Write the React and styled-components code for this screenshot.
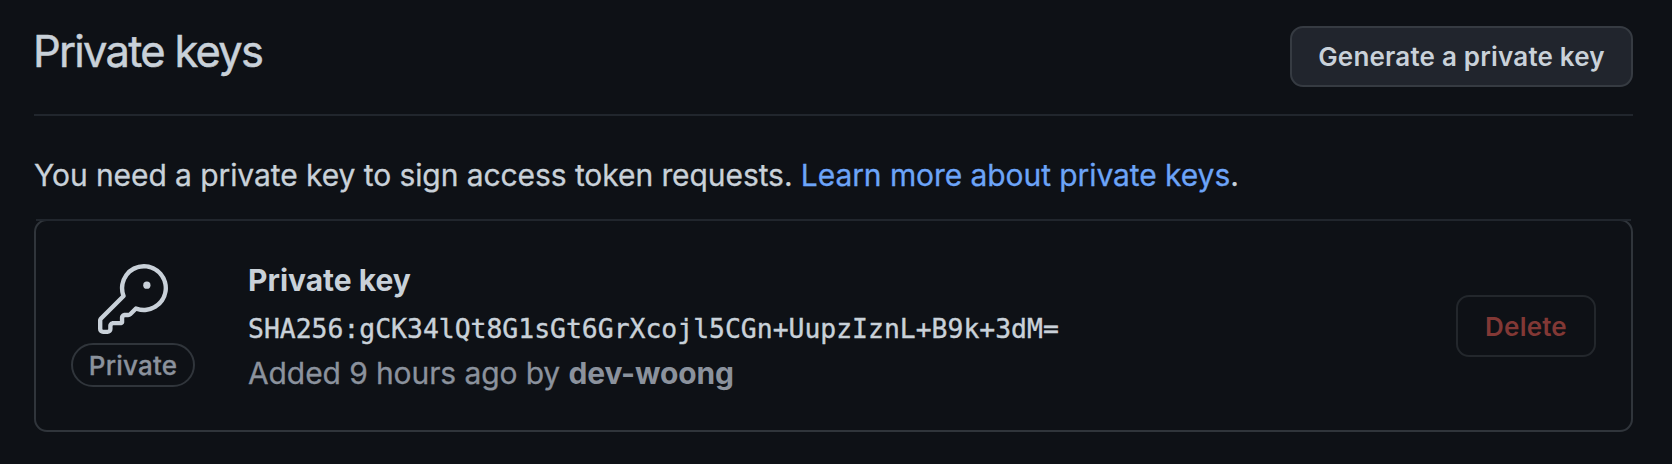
import React from 'react';
import styled, { createGlobalStyle } from 'styled-components';

const GlobalStyle = createGlobalStyle`
  * { box-sizing: border-box; }
  body {
    margin: 0;
    background: #0e1116;
    color: #c9d1d9;
    font-family: Inter, "Liberation Sans", sans-serif;
  }
`;

const Page = styled.main`
  width: 1672px;
  height: 464px;
  padding: 18px 39px 0 34px;
  overflow: hidden;
`;

const Header = styled.header`
  display: flex;
  justify-content: space-between;
  align-items: flex-start;
  height: 98px;
  border-bottom: 2px solid #21262d;
`;

const Title = styled.h2`
  margin: 0 0 0 -1px;
  font-size: 43.5px;
  font-weight: 400;
  line-height: 66px;
  letter-spacing: -1.75px;
  -webkit-text-stroke: 0.5px currentColor;
  white-space: nowrap;
`;

const Button = styled.button`
  display: flex;
  align-items: center;
  justify-content: center;
  flex: none;
  width: ${(p) => p.$width}px;
  height: ${(p) => p.$height}px;
  padding: 0;
  border: 2px solid ${(p) => (p.$danger ? '#23272c' : '#363b42')};
  border-radius: 13px;
  background: ${(p) => (p.$danger ? 'transparent' : '#21252d')};
  color: ${(p) => (p.$danger ? '#823835' : '#c9d1d9')};
  font-family: inherit;
  font-size: 26px;
  font-weight: 600;
  letter-spacing: 0.2px;
  white-space: nowrap;
`;

const HeaderAction = styled.div`
  padding-top: 8px;
`;

const Intro = styled.p`
  margin: 36px 0 21px;
  font-size: 30px;
  line-height: 46px;
  letter-spacing: -0.075px;
  -webkit-text-stroke: 0.3px currentColor;
  white-space: nowrap;
`;

const Link = styled.a`
  color: #6ca4f8;
  text-decoration: none;
`;

const KeyCard = styled.section`
  position: relative;
  display: flex;
  align-items: flex-start;
  height: 213px;
  padding: 0 35px;
  border: 2px solid #30353b;
  border-radius: 13px;

  &::before {
    content: "";
    position: absolute;
    top: -2px;
    left: 0;
    right: 0;
    height: 2px;
    background: #21262d;
  }
`;

const KeyBadge = styled.div`
  display: flex;
  flex-direction: column;
  align-items: center;
  width: 124px;
  padding-top: 43px;

  svg {
    display: block;
    fill: #c9d1d9;
  }
`;

const Pill = styled.span`
  width: 124px;
  height: 44px;
  margin-top: 9px;
  border: 2px solid #30353b;
  border-radius: 22px;
  color: #8b929d;
  font-size: 26px;
  font-weight: 500;
  line-height: 42px;
  letter-spacing: 0.2px;
  -webkit-text-stroke: 0.3px currentColor;
  text-align: center;
`;

const KeyInfo = styled.div`
  flex: 1;
  margin-left: 53px;
  padding-top: 36px;
  white-space: nowrap;
`;

const KeyName = styled.div`
  margin-bottom: 4px;
  font-size: 30px;
  font-weight: 700;
  line-height: 46px;
`;

const Fingerprint = styled.code`
  display: block;
  font-family: "DejaVu Sans Mono", monospace;
  font-size: 26.42px;
  line-height: 44px;
  -webkit-text-stroke: 0.4px currentColor;
`;

const Added = styled.div`
  color: #8b929d;
  font-size: 30px;
  line-height: 44px;
  letter-spacing: -0.1px;
  -webkit-text-stroke: 0.3px currentColor;

  strong {
    font-weight: 700;
    letter-spacing: -0.15px;
    -webkit-text-stroke: 0;
  }
`;

const KeyAction = styled.div`
  padding-top: 74px;
`;

const KeyIcon = () => (
  <svg width="70" height="70" viewBox="0 0 24 24" aria-hidden="true">
    <path d="M16.75 8.5a1.25 1.25 0 1 0 0-2.5 1.25 1.25 0 0 0 0 2.5Z" />
    <path d="M15.75 0a8.25 8.25 0 1 1-2.541 16.101l-1.636 1.636a1.744 1.744 0 0 1-1.237.513H9.25a.25.25 0 0 0-.25.25v1.448a.876.876 0 0 1-.256.619l-.214.213a.75.75 0 0 1-.545.22H5.25a.25.25 0 0 0-.25.25v1A1.75 1.75 0 0 1 3.25 24h-1.5A1.75 1.75 0 0 1 0 22.25v-2.836c0-.464.185-.908.513-1.236l7.386-7.388A8.249 8.249 0 0 1 15.75 0ZM9 8.25a6.733 6.733 0 0 0 .463 2.462.75.75 0 0 1-.168.804l-7.722 7.721a.25.25 0 0 0-.073.177v2.836c0 .138.112.25.25.25h1.5a.25.25 0 0 0 .25-.25v-1c0-.966.784-1.75 1.75-1.75H7.5v-1c0-.966.784-1.75 1.75-1.75h1.086a.25.25 0 0 0 .177-.073l1.971-1.972a.75.75 0 0 1 .804-.168A6.75 6.75 0 1 0 9 8.25Z" />
  </svg>
);

export default function App() {
  return (
    <>
      <GlobalStyle />
      <Page>
        <Header>
          <Title>Private keys</Title>
          <HeaderAction>
            <Button $width={343} $height={61}>Generate a private key</Button>
          </HeaderAction>
        </Header>
        <Intro>
          You need a private key to sign access token requests. <Link>Learn more about private keys</Link>.
        </Intro>
        <KeyCard>
          <KeyBadge>
            <KeyIcon />
            <Pill>Private</Pill>
          </KeyBadge>
          <KeyInfo>
            <KeyName>Private key</KeyName>
            <Fingerprint>SHA256:gCK34lQt8G1sGt6GrXcojl5CGn+UupzIznL+B9k+3dM=</Fingerprint>
            <Added>Added 9 hours ago by <strong>dev-woong</strong></Added>
          </KeyInfo>
          <KeyAction>
            <Button $danger $width={140} $height={62}>Delete</Button>
          </KeyAction>
        </KeyCard>
      </Page>
    </>
  );
}
